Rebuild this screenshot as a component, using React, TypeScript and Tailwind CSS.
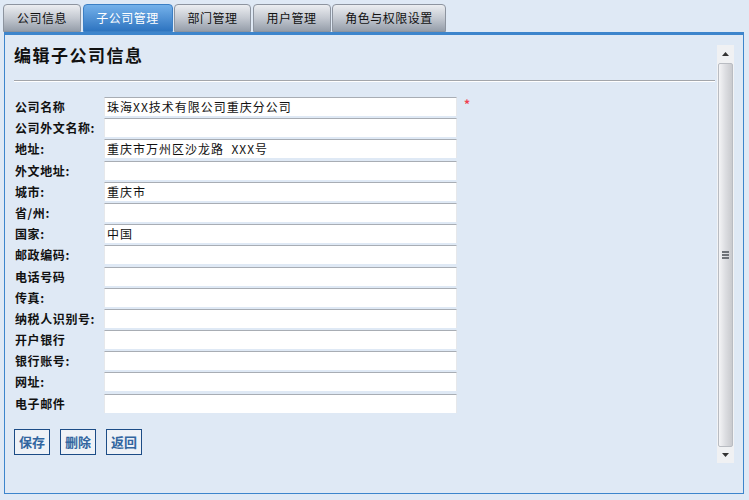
import React from 'react';

const tabs = [
    { label: '公司信息', w: 'w-[78px]' },
    { label: '子公司管理', w: 'w-[90px]', active: true },
    { label: '部门管理', w: 'w-[77px]' },
    { label: '用户管理', w: 'w-[78px]' },
    { label: '角色与权限设置', w: 'w-[114px]' },
];

const fields = [
    { label: '公司名称', value: '珠海XX技术有限公司重庆分公司', required: true },
    { label: '公司外文名称:', value: '' },
    { label: '地址:', value: '重庆市万州区沙龙路  XXX号' },
    { label: '外文地址:', value: '' },
    { label: '城市:', value: '重庆市' },
    { label: '省/州:', value: '' },
    { label: '国家:', value: '中国' },
    { label: '邮政编码:', value: '' },
    { label: '电话号码', value: '' },
    { label: '传真:', value: '' },
    { label: '纳税人识别号:', value: '' },
    { label: '开户银行', value: '' },
    { label: '银行账号:', value: '' },
    { label: '网址:', value: '' },
    { label: '电子邮件', value: '' },
];

function Scrollbar() {
    return (
        <div className="mt-[10px] mb-[30px] mr-[9px] w-[17px] flex flex-col bg-[#f2f3f5]">
            <div className="h-[18px] flex items-center justify-center bg-[#f0f1f3]">
                <svg width="7" height="4" viewBox="0 0 7 4"><path d="M3.5 0L7 4H0z" fill="#333" /></svg>
            </div>
            <div className="flex-1 mx-[1px] rounded-[2px] border border-[#b9bcc2] bg-gradient-to-r from-[#f4f4f6] via-[#dcdde1] to-[#c9cace] flex items-center justify-center">
                <div className="flex flex-col gap-[1px]">
                    <div className="w-[7px] h-[2px] bg-[#6e7278]" />
                    <div className="w-[7px] h-[2px] bg-[#6e7278]" />
                    <div className="w-[7px] h-[2px] bg-[#6e7278]" />
                </div>
            </div>
            <div className="h-[16px] flex items-center justify-center bg-[#f0f1f3]">
                <svg width="7" height="4" viewBox="0 0 7 4"><path d="M0 0H7L3.5 4z" fill="#333" /></svg>
            </div>
        </div>
    );
}

export default function App() {
    return (
        <div
            className="w-[749px] h-[500px] bg-[#dfe9f5] pt-[4px] pl-[4px] overflow-hidden"
            style={{ fontFamily: '"Noto Sans CJK SC", "Noto Sans", sans-serif' }}
        >
            <div className="flex gap-[1.5px] h-[28px] -ml-[1px]">
                {tabs.map(t => (
                    <div
                        key={t.label}
                        className={
                            t.active
                                ? `${t.w} h-[28px] rounded-t-[4px] border border-[#3b7fc4] bg-gradient-to-b from-[#74b1ea] to-[#2d74c0] text-white text-[12px] tracking-[0.5px] flex items-center justify-center`
                                : `${t.w} h-[28px] rounded-t-[4px] border border-[#8d949f] bg-gradient-to-b from-[#eceef1] via-[#c4c9d1] to-[#969eaa] text-[#111] text-[12px] tracking-[0.5px] flex items-center justify-center`
                        }
                    >
                        {t.label}
                    </div>
                ))}
            </div>

            <div className="w-[740px] h-[462px] border-t-[3px] border-x border-b border-[#3d85cc] flex">
                <div className="flex-1 pl-[9px] pr-[2px]">
                    <div className="pt-[8px] h-[32px]">
                        <h1 className="text-[17px] leading-[24px] font-bold text-[#111] tracking-[1.5px]">编辑子公司信息</h1>
                    </div>
                    <div className="mt-[13px] h-[2px] border-t border-[#a3a6ab] border-b border-b-white" />

                    <div className="mt-[15px] pl-[1px]">
                        {fields.map(f => (
                            <div key={f.label} className="h-[21.2px] flex items-start">
                                <div className="w-[89px] h-[19px] leading-[19px] text-[12px] font-bold text-[#111] tracking-[0.6px] whitespace-nowrap">
                                    {f.label}
                                </div>
                                <div className="w-[353px] h-[19px] bg-white border-t border-t-[#a8adb4] border-l border-l-[#e6e8eb] border-r border-r-[#e6e8eb] px-[2px] text-[12px] leading-[17px] text-[#111] tracking-[1px] whitespace-pre">
                                    {f.value}
                                </div>
                                {f.required && (
                                    <span className="ml-[7px] text-[12px] font-bold leading-[14px] text-[#f04050]">*</span>
                                )}
                            </div>
                        ))}
                    </div>

                    <div className="mt-[14px] flex gap-[10px]">
                        {['保存', '删除', '返回'].map(b => (
                            <button
                                key={b}
                                className="w-[36px] h-[26px] border border-[#1c4c86] bg-[#eef2f7] text-[13px] font-bold text-[#3366a0] flex items-center justify-center"
                            >
                                {b}
                            </button>
                        ))}
                    </div>
                </div>
                <Scrollbar />
            </div>
        </div>
    );
}
